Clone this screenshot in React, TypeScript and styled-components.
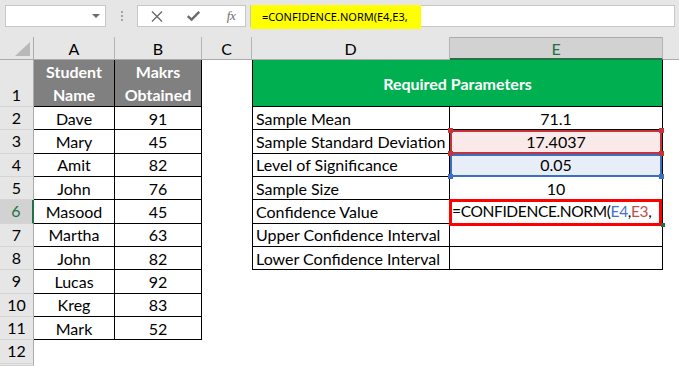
import React from "react";
import styled, { createGlobalStyle, css } from "styled-components";

const GlobalStyle = createGlobalStyle`
  html, body { margin: 0; padding: 0; background: #fff; }
  body { font-family: "Lato", "Liberation Sans", sans-serif; }
`;

const Window = styled.div`
  width: 679px;
  height: 366px;
  overflow: hidden;
  background: #fff;
  display: flex;
  flex-direction: column;
`;

const Toolbar = styled.div`
  height: 37px;
  flex: none;
  box-sizing: border-box;
  background: #e6e6e6;
  display: flex;
  align-items: flex-start;
  padding: 5px 4px 0 5px;
`;

const NameBox = styled.div`
  width: 101px;
  height: 22px;
  box-sizing: border-box;
  background: #fff;
  border: 1px solid #c6c6c6;
  display: flex;
  align-items: center;
  justify-content: flex-end;
  padding-right: 5px;
`;

const DropArrow = styled.span`
  width: 0;
  height: 0;
  border-left: 4px solid transparent;
  border-right: 4px solid transparent;
  border-top: 4px solid #6b6b6b;
`;

const Grip = styled.div`
  width: 31px;
  height: 22px;
  display: flex;
  flex-direction: column;
  align-items: center;
  justify-content: center;
  gap: 2px;
`;

const GripDot = styled.span`
  width: 2px;
  height: 2px;
  background: #a3a3a3;
`;

const FuncBox = styled.div`
  width: 109px;
  height: 22px;
  box-sizing: border-box;
  background: #fff;
  border: 1px solid #c6c6c6;
  display: grid;
  grid-template-columns: 36px 36px 36px;
  align-items: center;
  justify-items: center;
  padding-left: 1px;
`;

const Fx = styled.span`
  font-family: "Liberation Serif", serif;
  font-style: italic;
  font-size: 13px;
  color: #6b6b6b;
  letter-spacing: -0.5px;
  margin-left: 4px;
`;

const FormulaBar = styled.div`
  flex: 1;
  margin-left: 4px;
  height: 22px;
  box-sizing: border-box;
  background: #fff;
  border: 1px solid #c6c6c6;
  display: flex;
  align-items: flex-start;
`;

const Highlight = styled.span`
  width: 170px;
  height: 24px;
  margin-top: -1px;
  box-sizing: border-box;
  padding-left: 11px;
  background: #ffff00;
  font-family: "Noto Sans", "Liberation Sans", sans-serif;
  font-size: 11px;
  line-height: 24px;
  color: #000;
  white-space: nowrap;
`;

const Sheet = styled.div`
  flex: 1;
  display: grid;
  grid-template-columns: 34px 81px 87px 50px 198px 213px 1fr;
  grid-template-rows: 23px 47px repeat(11, 23.33px) 1fr;
  background: #fff;
  font-size: 16px;
  color: #000;
`;

const Corner = styled.div`
  background: #e6e6e6;
  border-right: 1px solid #ababab;
  border-bottom: 1px solid #ababab;
  display: flex;
  align-items: flex-end;
  justify-content: flex-end;
  padding: 0 3px 3px 0;
`;

const CornerTriangle = styled.span`
  width: 0;
  height: 0;
  border-left: 15px solid transparent;
  border-bottom: 14px solid #b9b9b9;
`;

const ColHead = styled.div<{ $active?: boolean }>`
  background: #e6e6e6;
  border-right: 1px solid #b4b4b4;
  border-bottom: 1px solid #ababab;
  display: flex;
  align-items: center;
  justify-content: center;
  ${(p) =>
    p.$active &&
    css`
      background: #d2d2d2;
      color: #217346;
      border-top: 1px solid #ababab;
      border-bottom: 2px solid #217346;
    `}
`;

const HeadFill = styled.div`
  background: #e6e6e6;
  border-bottom: 1px solid #ababab;
`;

const RowHead = styled.div<{ $active?: boolean; $bottom?: boolean }>`
  background: #e6e6e6;
  border-right: 1px solid #ababab;
  border-bottom: 1px solid #d4d4d4;
  display: flex;
  align-items: ${(p) => (p.$bottom ? "flex-end" : "center")};
  justify-content: center;
  line-height: 22px;
  ${(p) =>
    p.$active &&
    css`
      background: #d2d2d2;
      color: #217346;
      border-right: 2px solid #217346;
    `}
`;

const Cell = styled.div<{
  $align?: "left" | "center";
  $grid?: boolean;
  $leftEdge?: boolean;
  $span?: number;
  $bg?: string;
  $head?: boolean;
}>`
  position: relative;
  box-sizing: border-box;
  display: flex;
  align-items: center;
  justify-content: ${(p) => (p.$align === "left" ? "flex-start" : "center")};
  padding: 0 3px;
  white-space: nowrap;
  background: ${(p) => p.$bg || "transparent"};
  ${(p) => p.$span && `grid-column: span ${p.$span};`}
  ${(p) =>
    p.$grid &&
    css`
      border-right: 1px solid #000;
      border-bottom: 1px solid #000;
    `}
  ${(p) => p.$leftEdge && `border-left: 1px solid #000;`}
  ${(p) =>
    p.$head &&
    css`
      color: #fff;
      font-weight: 700;
      text-align: center;
      line-height: 23px;
    `}
`;

const Formula = styled.span`
  font-size: 15.5px;
  letter-spacing: -0.35px;
  margin-left: -1px;
`;

const Mark = styled.span<{ $color: string; $w: number; $inset: string }>`
  position: absolute;
  inset: ${(p) => p.$inset};
  border: ${(p) => p.$w}px solid ${(p) => p.$color};
  pointer-events: none;
  z-index: 2;
`;

const Handle = styled.span<{ $color: string; $x: "l" | "r"; $y: "t" | "b" }>`
  position: absolute;
  width: 5px;
  height: 5px;
  background: ${(p) => p.$color};
  z-index: 3;
  ${(p) => (p.$x === "l" ? "left: -2px;" : "right: -2px;")}
  ${(p) => (p.$y === "t" ? "top: -2px;" : "bottom: -3px;")}
`;

const FillHandle = styled.span`
  position: absolute;
  right: -3px;
  bottom: -4px;
  width: 4px;
  height: 4px;
  background: #217346;
  z-index: 3;
`;

const Ref = styled.span<{ $color: string }>`
  color: ${(p) => p.$color};
`;

const students = [
  ["Dave", "91"],
  ["Mary", "45"],
  ["Amit", "82"],
  ["John", "76"],
  ["Masood", "45"],
  ["Martha", "63"],
  ["John", "82"],
  ["Lucas", "92"],
  ["Kreg", "83"],
  ["Mark", "52"],
];

const params = [
  ["Sample Mean", "71.1"],
  ["Sample Standard Deviation", "17.4037"],
  ["Level of Significance", "0.05"],
  ["Sample Size", "10"],
  ["Confidence Value", ""],
  ["Upper Confidence Interval", ""],
  ["Lower Confidence Interval", ""],
];

const RED = "#c4333b";
const BLUE = "#3b6fc6";

function ParamValue({ row }: { row: number }) {
  const [, value] = params[row];
  if (row === 1) {
    return (
      <Cell $grid $bg="#fae9e9">
        {value}
        <Mark $color={RED} $w={2} $inset="0 0 -1px 0" />
        <Handle $color={RED} $x="l" $y="t" />
        <Handle $color={RED} $x="r" $y="t" />
        <Handle $color={RED} $x="l" $y="b" />
        <Handle $color={RED} $x="r" $y="b" />
      </Cell>
    );
  }
  if (row === 2) {
    return (
      <Cell $grid $bg="#e8eef8">
        {value}
        <Mark $color={BLUE} $w={2} $inset="0 0 -1px 0" />
        <Handle $color={BLUE} $x="l" $y="b" />
        <Handle $color={BLUE} $x="r" $y="b" />
      </Cell>
    );
  }
  if (row === 4) {
    return (
      <Cell $grid $align="left">
        <Formula>
          =CONFIDENCE.NORM(<Ref $color="#4472c4">E4</Ref>,<Ref $color="#c0504d">E3</Ref>,
        </Formula>
        <Mark $color="#ff0000" $w={3} $inset="-1px 0 -3px -1px" />
        <FillHandle />
      </Cell>
    );
  }
  return <Cell $grid>{value}</Cell>;
}

export default function App() {
  const rows = [];
  for (let r = 2; r <= 12; r++) {
    const s = students[r - 2];
    const p = r - 2 < params.length ? params[r - 2] : null;
    rows.push(
      <React.Fragment key={r}>
        <RowHead $active={r === 6}>{r}</RowHead>
        {s ? <Cell $grid>{s[0]}</Cell> : <Cell />}
        {s ? <Cell $grid>{s[1]}</Cell> : <Cell />}
        <Cell />
        {p ? (
          <Cell $grid $leftEdge $align="left">
            {p[0]}
          </Cell>
        ) : (
          <Cell />
        )}
        {p ? <ParamValue row={r - 2} /> : <Cell />}
        <Cell />
      </React.Fragment>
    );
  }

  return (
    <Window>
      <GlobalStyle />
      <Toolbar>
        <NameBox>
          <DropArrow />
        </NameBox>
        <Grip>
          <GripDot />
          <GripDot />
          <GripDot />
        </Grip>
        <FuncBox>
          <svg width="12" height="11" viewBox="0 0 12 11">
            <path d="M1 0.5 L11 10.5 M11 0.5 L1 10.5" stroke="#6b6b6b" strokeWidth="1.4" fill="none" />
          </svg>
          <svg width="13" height="10" viewBox="0 0 13 10">
            <path d="M0.8 5 L4.6 8.6 L12.2 0.8" stroke="#6b6b6b" strokeWidth="2.4" fill="none" />
          </svg>
          <Fx>fx</Fx>
        </FuncBox>
        <FormulaBar>
          <Highlight>=CONFIDENCE.NORM(E4,E3,</Highlight>
        </FormulaBar>
      </Toolbar>
      <Sheet>
        <Corner>
          <CornerTriangle />
        </Corner>
        <ColHead>A</ColHead>
        <ColHead>B</ColHead>
        <ColHead>C</ColHead>
        <ColHead>D</ColHead>
        <ColHead $active>E</ColHead>
        <HeadFill />

        <RowHead $bottom>1</RowHead>
        <Cell $grid $head $bg="#808080">
          Student
          <br />
          Name
        </Cell>
        <Cell $grid $head $bg="#808080">
          Makrs
          <br />
          Obtained
        </Cell>
        <Cell />
        <Cell $grid $leftEdge $head $span={2} $bg="#00b050">
          Required Parameters
        </Cell>
        <Cell />
        {rows}
        <RowHead />
      </Sheet>
    </Window>
  );
}
